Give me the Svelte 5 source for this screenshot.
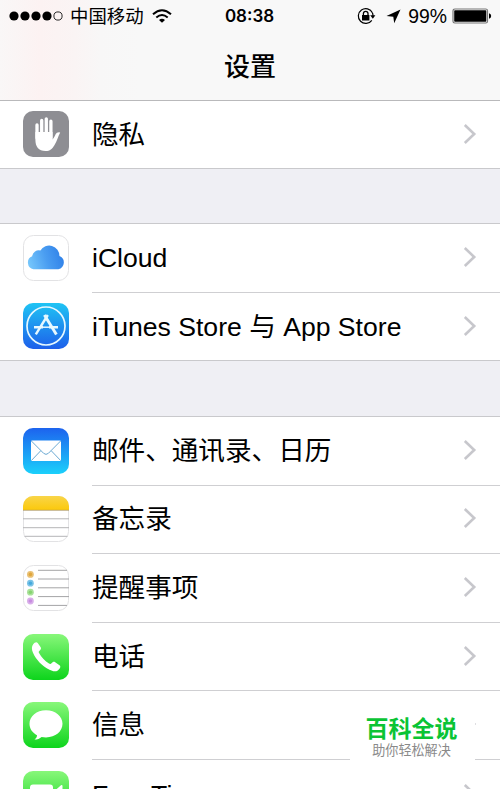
<script>
    const groups = [
        [{ icon: 'privacy', label: '隐私' }],
        [
            { icon: 'icloud', label: 'iCloud' },
            { icon: 'store', label: 'iTunes Store 与 App Store' },
        ],
        [
            { icon: 'mail', label: '邮件、通讯录、日历' },
            { icon: 'notes', label: '备忘录' },
            { icon: 'reminders', label: '提醒事项' },
            { icon: 'phone', label: '电话' },
            { icon: 'messages', label: '信息' },
            { icon: 'facetime', label: 'FaceTime' },
        ],
    ];

    const dots = [
        { y: 9.4, color: '#e0a63c' },
        { y: 18.2, color: '#45a9dc' },
        { y: 27.2, color: '#86d470' },
        { y: 36, color: '#c78be0' },
    ];
</script>

<div class="screen">
    <header>
        <div class="status">
            <div class="carrier">
                <svg class="signal" width="54" height="12" viewBox="0 0 54 12">
                    {#each [5, 16, 27, 38] as x}
                        <circle cx={x} cy="6" r="4.6" />
                    {/each}
                    <circle cx="49" cy="6" r="4.1" fill="none" stroke="#111" stroke-width="0.9" />
                </svg>
                <span class="operator">中国移动</span>
                <svg class="wifi" width="20" height="14" viewBox="0 0 20 14" fill="none" stroke="#000" stroke-width="2">
                    <path d="M1 5.2Q10-2.8 19 5.2" />
                    <path d="M4.3 8.5Q10 3.6 15.7 8.5" />
                    <path d="M7 11Q10 8.6 13 11L10 13.8Z" fill="#000" stroke="none" />
                </svg>
            </div>
            <span class="time">08:38</span>
            <div class="indicators">
                <svg class="lock" width="19" height="18" viewBox="0 0 19 18" fill="none" stroke="#000" stroke-width="1.2">
                    <path d="M15.4 5.8A7.4 7.4 0 1 0 14.8 13.3" />
                    <path d="M15.4 5.8Q16 7.2 16 9" />
                    <path d="M13.2 8.3H18.4L15.8 11.7Z" fill="#000" stroke="none" />
                    <rect x="5" y="8" width="7.4" height="5.5" fill="#000" stroke="none" />
                    <path d="M6.4 8.4V6.6a2.3 2.3 0 0 1 4.6 0V8.4" stroke-width="1.3" />
                </svg>
                <svg class="location" width="15" height="15" viewBox="0 0 15 15">
                    <path d="M14.5.5L8.2 14.3L7.3 7.7L.5 6.9Z" />
                </svg>
                <span class="percent">99%</span>
                <svg class="battery" width="40" height="16" viewBox="0 0 40 16">
                    <rect x="1" y="1" width="34.5" height="14" rx="1.8" fill="#f8f8f8" stroke="#777" stroke-width="1.2" />
                    <rect x="2.2" y="2.2" width="32.1" height="11.6" rx="0.8" />
                    <path d="M37 5.3Q39.2 6 39.2 8T37 10.7Z" />
                </svg>
            </div>
        </div>
        <h1>设置</h1>
    </header>

    {#each groups as rows}
        <ul class="group">
            {#each rows as { icon, label }}
                <li class="row">
                    <svg class="icon" width="46" height="46" viewBox="0 0 46 46">
                        {#if icon === 'privacy'}
                            <rect width="46" height="46" rx="10" fill="#8e8e93" />
                            <g fill="none" stroke="#fff" stroke-width="3.3" stroke-linecap="round">
                                <path d="M14 14V27M18.7 9.5V27M23.3 7.8V27M27.9 10.2V27" />
                            </g>
                            <path d="M12.4 21H29.5V28.5C31.6 26.5 32.1 23.2 33.9 21.8Q35.6 20.8 37.2 21.4C35 25 34.2 30 31.4 34.2C29.2 38 27 40 22.6 40C15.5 40 12.4 35.5 12.4 29Z" fill="#fff" />
                        {:else if icon === 'icloud'}
                            <defs>
                                <linearGradient id="cloud" x1="0" y1="0.6" x2="1" y2="0.4">
                                    <stop offset="0" stop-color="#74c5fb" />
                                    <stop offset="0.5" stop-color="#4a9df1" />
                                    <stop offset="1" stop-color="#2f80e8" />
                                </linearGradient>
                            </defs>
                            <rect x="0.5" y="0.5" width="45" height="45" rx="10" fill="#fff" stroke="#e2e2e4" />
                            <path d="M10.5 34.2A6.8 6.8 0 0 1 9.2 21.2A6.6 6.6 0 0 1 17.4 15.6A10.2 10.2 0 0 1 36.4 21A6.9 6.9 0 0 1 35.3 34.2Z" fill="url(#cloud)" />
                        {:else if icon === 'store'}
                            <defs>
                                <linearGradient id="store" x2="0" y2="1">
                                    <stop offset="0" stop-color="#1fc4f4" />
                                    <stop offset="1" stop-color="#1d5fea" />
                                </linearGradient>
                            </defs>
                            <rect width="46" height="46" rx="10" fill="url(#store)" />
                            <circle cx="23" cy="23" r="19" fill="none" stroke="#e6f8ff" stroke-width="1.7" />
                            <g fill="none" stroke="#e6f8ff">
                                <path d="M24.8 12L12.8 31.4" stroke-width="2.4" />
                                <path d="M21.4 12L33.4 31.6" stroke-width="2.9" />
                                <path d="M11 24.2H20M26 24.2H35" stroke-width="2.4" />
                                <path d="M18 24.2H27" stroke-width="1.5" />
                            </g>
                        {:else if icon === 'mail'}
                            <defs>
                                <linearGradient id="mail" x2="0" y2="1">
                                    <stop offset="0" stop-color="#1d63ee" />
                                    <stop offset="1" stop-color="#1bd0fb" />
                                </linearGradient>
                            </defs>
                            <rect width="46" height="46" rx="10" fill="url(#mail)" />
                            <rect x="8" y="12.5" width="30" height="20.5" rx="1.2" fill="#fff" />
                            <path d="M8.4 13L20.6 25.3Q23 27.5 25.4 25.3L37.6 13M8.4 32.5L17.7 22.8M37.6 32.5L28.3 22.8" fill="none" stroke="#5a9fcd" stroke-width="0.9" />
                        {:else if icon === 'notes'}
                            <defs>
                                <linearGradient id="notes" x2="0" y2="1">
                                    <stop offset="0" stop-color="#f9d549" />
                                    <stop offset="1" stop-color="#fbc90c" />
                                </linearGradient>
                            </defs>
                            <rect x="0.5" y="0.5" width="45" height="45" rx="10" fill="#fff" stroke="#e2e2e4" />
                            <path d="M0 14V10A10 10 0 0 1 10 0H36A10 10 0 0 1 46 10V14Z" fill="url(#notes)" />
                            <path d="M0 14.3H46" stroke="#b09a63" stroke-width="0.8" />
                            <path d="M0 22.8H46M0 31.7H46M1.5 40.3H44.5" stroke="#b5b5b7" stroke-width="1" />
                        {:else if icon === 'reminders'}
                            <rect x="0.5" y="0.5" width="45" height="45" rx="10" fill="#fff" stroke="#e2e2e4" />
                            <path d="M15 5.3H44M15 14H46M15 22.8H46M15 31.6H46M15 40.4H44" stroke="#a4a4a6" />
                            {#each dots as dot}
                                <circle cx="7.4" cy={dot.y} r="3.4" fill={dot.color} opacity="0.7" />
                                <circle cx="7.4" cy={dot.y} r="1.8" fill={dot.color} />
                            {/each}
                        {:else}
                            <defs>
                                <linearGradient id="green-{icon}" x2="0" y2="1">
                                    <stop offset="0" stop-color="#88f77a" />
                                    <stop offset="1" stop-color="#0dd41c" />
                                </linearGradient>
                            </defs>
                            <rect width="46" height="46" rx="10" fill="url(#green-{icon})" />
                            {#if icon === 'phone'}
                                <path d="M10.2 10.2C11.4 8.6 13.4 7.5 14.7 8.9L17.7 13.2C18.6 14.6 17.5 15.9 16.2 16.9C15.5 17.6 15.7 18.5 16.2 19.3C18.5 23.3 22 27 26 29.6C27 30.2 27.9 30.1 28.5 29.3C29.5 28 30.8 27.2 32.2 28.2L36.8 31.5C38.2 33 36.5 35.2 34.8 36.4C32.4 38 29.4 37.3 26.5 35.8C19 32 13 25.6 9.9 18.5C8.6 15.5 8.5 12.4 10.2 10.2Z" fill="#fff" />
                            {:else if icon === 'messages'}
                                <path d="M23 8.2C32.5 8.2 39.5 14.2 39.5 21.8S32.5 35.4 23 35.4C21.4 35.4 20 35.2 18.6 34.9C16.8 36.6 14.3 37.5 11.5 37.5C13.3 36.2 14.1 34.7 14 33.2C9.4 30.8 6.5 26.7 6.5 21.8C6.5 14.2 13.5 8.2 23 8.2Z" fill="#fff" />
                            {:else}
                                <path d="M10 13.5H27a3 3 0 0 1 3 3V30a3 3 0 0 1-3 3H10a3 3 0 0 1-3-3V16.5a3 3 0 0 1 3-3ZM31.5 20L38 14.2Q39.5 13.6 39.5 15V31.5Q39.5 33 38 32.2L31.5 26.5Z" fill="#fff" />
                            {/if}
                        {/if}
                    </svg>
                    <div class="content">
                        <span class="label">{label}</span>
                        <svg class="chevron" width="14" height="20" viewBox="0 0 14 20">
                            <path d="M1.8 1L11.2 10L1.8 19" fill="none" stroke="#c7c7cc" stroke-width="2.6" />
                        </svg>
                    </div>
                </li>
            {/each}
        </ul>
    {/each}

    <div class="badge">
        <strong>百科全说</strong>
        <span>助你轻松解决</span>
    </div>
</div>

<style>
    :global(body) {
        margin: 0;
    }
    .screen {
        position: relative;
        width: 500px;
        height: 789px;
        overflow: hidden;
        background: #efeff4;
        color: #000;
        font-family: "Liberation Sans", "Noto Sans CJK SC", sans-serif;
    }
    header {
        box-sizing: border-box;
        height: 101px;
        border-bottom: 1px solid #b9b9bb;
        background: linear-gradient(90deg, #f9f7f7 0, #fcf2f2 40px, #faf4f4 75px, #f8f7f7 100px, #f8f8f8 140px);
    }
    .status {
        display: grid;
        grid-template-columns: 1fr auto 1fr;
        align-items: center;
        height: 32px;
        padding: 0 8px 0 9px;
    }
    .carrier, .indicators {
        display: flex;
        align-items: center;
    }
    .indicators {
        justify-content: flex-end;
    }
    .operator {
        margin: 0 8px 0 7px;
        padding-top: 2px;
        font-size: 18.4px;
        line-height: 28px;
    }
    .time {
        margin-right: 2px;
        font-family: "Inter", sans-serif;
        font-size: 17px;
        font-weight: 600;
    }
    .lock {
        margin-right: 10px;
    }
    .location {
        margin-right: 7px;
    }
    .percent {
        margin-right: 5px;
        font-size: 19.4px;
    }
    h1 {
        margin: 15px 0 0;
        font-size: 26px;
        font-weight: 500;
        line-height: 40px;
        text-align: center;
    }
    .group {
        margin: 0 0 54.7px;
        padding: 0;
        border-top: 1px solid #c9c9cc;
        border-bottom: 1px solid #c9c9cc;
        background: #fff;
        list-style: none;
    }
    header + .group {
        margin-bottom: 54px;
        border-top: 0;
    }
    .row {
        display: flex;
        align-items: center;
        height: 68.6px;
        padding-left: 23px;
    }
    .row:last-child {
        height: 67.4px;
    }
    .group:last-of-type .row:last-child {
        height: 69px;
    }
    .icon {
        flex: none;
        margin: 0 23px 1px 0;
    }
    .content {
        box-sizing: border-box;
        display: flex;
        flex: 1;
        align-items: center;
        justify-content: space-between;
        height: 100%;
        padding-right: 23px;
        border-bottom: 1px solid #cfcfd2;
    }
    .row:last-child .content {
        border-bottom: 0;
    }
    .label {
        font-size: 26.6px;
        line-height: 40px;
        white-space: nowrap;
    }
    .chevron {
        margin-bottom: 2px;
    }
    .badge {
        position: absolute;
        top: 701px;
        left: 350px;
        display: flex;
        flex-direction: column;
        align-items: center;
        box-sizing: border-box;
        width: 125px;
        height: 82px;
        padding: 12px 2px 0 0;
        background: #fff;
    }
    .badge strong {
        color: #0ac435;
        font-size: 23px;
        font-weight: 700;
        line-height: 32px;
    }
    .badge span {
        color: #8a8a8a;
        font-size: 13.1px;
        line-height: 12px;
    }
</style>
